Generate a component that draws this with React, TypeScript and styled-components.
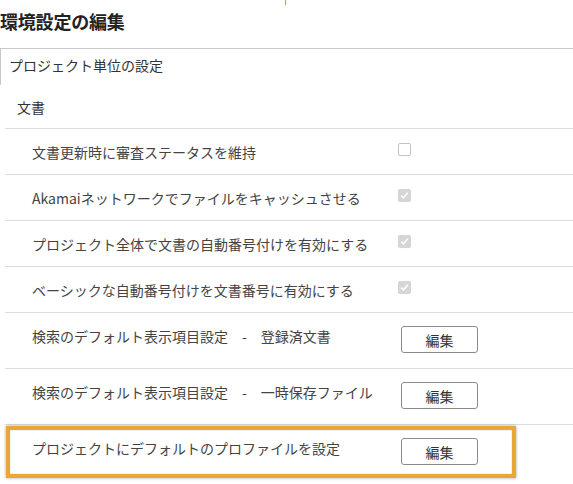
import styled, { createGlobalStyle } from 'styled-components';

const GlobalStyle = createGlobalStyle`
  body {
    margin: 0;
    background: #fff;
    font-family: "Noto Sans CJK JP", "Noto Sans", sans-serif;
    color: #333;
  }
`;

interface Setting {
  label: string;
  kind: 'check' | 'button';
  checked?: boolean;
  highlight?: boolean;
}

const settings: Setting[] = [
  { label: '文書更新時に審査ステータスを維持', kind: 'check', checked: false },
  { label: 'Akamaiネットワークでファイルをキャッシュさせる', kind: 'check', checked: true },
  { label: 'プロジェクト全体で文書の自動番号付けを有効にする', kind: 'check', checked: true },
  { label: 'ベーシックな自動番号付けを文書番号に有効にする', kind: 'check', checked: true },
  { label: '検索のデフォルト表示項目設定\u3000-\u3000登録済文書', kind: 'button' },
  { label: '検索のデフォルト表示項目設定\u3000-\u3000一時保存ファイル', kind: 'button' },
  { label: 'プロジェクトにデフォルトのプロファイルを設定', kind: 'button', highlight: true },
];

const CheckBox = ({ checked }: { checked?: boolean }) => (
  <Box $checked={checked}>
    {checked && (
      <svg width="9" height="9" viewBox="0 0 9 9">
        <path d="M1.2 4.6 L3.5 6.9 L7.8 1.8" fill="none" stroke="#fff" strokeWidth="1.6" />
      </svg>
    )}
  </Box>
);

const App = () => (
  <>
    <GlobalStyle />
    <Page>
      <CursorMark />
      <Title>環境設定の編集</Title>
      <Panel>
        <TabHeader>プロジェクト単位の設定</TabHeader>
        <Section>
          <SectionTitle>文書</SectionTitle>
          {settings.map(s => (
            <Row key={s.label} $tall={s.kind === 'button'}>
              <Label>{s.label}</Label>
              {s.kind === 'check' ? (
                <CheckBox checked={s.checked} />
              ) : (
                <EditButton>編集</EditButton>
              )}
              {s.highlight && <Highlight />}
            </Row>
          ))}
        </Section>
      </Panel>
    </Page>
  </>
);

export default App;

const Page = styled.div`
  position: relative;
  width: 573px;
  height: 484px;
  overflow: hidden;
`;

const CursorMark = styled.div`
  position: absolute;
  left: 285px;
  top: 0;
  width: 1px;
  height: 5px;
  background: #e0a040;
  box-shadow: 0 0 2px rgba(224, 160, 64, 0.6);
`;

const Title = styled.h2`
  margin: 0;
  height: 48px;
  padding-top: 8px;
  box-sizing: border-box;
  font-size: 18px;
  line-height: 26px;
  font-weight: 700;
  color: #222;
  letter-spacing: -0.2px;
`;

const Panel = styled.div`
  border-top: 1px solid #c8c8c8;
`;

const TabHeader = styled.div`
  height: 36px;
  padding-left: 8px;
  border-left: 1px solid #c8c8c8;
  font-size: 14px;
  line-height: 32px;
  color: #333;
`;

const Section = styled.div`
  margin-left: 5px;
`;

const SectionTitle = styled.div`
  height: 43px;
  padding-left: 12px;
  border-bottom: 1px solid #ddd;
  font-size: 14px;
  line-height: 44px;
  color: #333;
`;

const Row = styled.div<{ $tall?: boolean }>`
  position: relative;
  display: flex;
  align-items: ${p => (p.$tall ? 'flex-start' : 'center')};
  height: ${p => (p.$tall ? '56px' : '46px')};
  padding-top: ${p => (p.$tall ? '13px' : '0')};
  box-sizing: border-box;
  border-bottom: 1px solid #ddd;
  &:last-child {
    border-bottom: none;
  }
`;

const Label = styled.div`
  flex: 0 0 393px;
  padding-left: 27px;
  box-sizing: border-box;
  font-size: 14px;
  line-height: 20px;
  color: #444;
  white-space: nowrap;
`;

const Box = styled.span<{ $checked?: boolean }>`
  display: inline-flex;
  align-items: center;
  justify-content: center;
  width: 13px;
  height: 13px;
  box-sizing: border-box;
  border-radius: 2px;
  margin-top: -4px;
  background: ${p => (p.$checked ? '#d6d6d6' : '#fff')};
  border: 1px solid ${p => (p.$checked ? '#d6d6d6' : '#c4c4c4')};
  box-shadow: 0 0 1px rgba(0, 0, 0, 0.08);
`;

const EditButton = styled.button`
  width: 77px;
  height: 27px;
  margin-left: 3px;
  padding: 0;
  background: #fff;
  border: 1px solid #8a8a8a;
  border-radius: 3px;
  font-family: "Noto Sans CJK JP", sans-serif;
  font-size: 14px;
  color: #333;
  cursor: pointer;
`;

const Highlight = styled.div`
  position: absolute;
  left: 1px;
  top: 1px;
  width: 510px;
  height: 52px;
  box-sizing: border-box;
  border: 4px solid #e9a73a;
  box-shadow: 0 0 3px rgba(0, 0, 0, 0.35), inset 0 0 2px rgba(0, 0, 0, 0.2);
  pointer-events: none;
`;
